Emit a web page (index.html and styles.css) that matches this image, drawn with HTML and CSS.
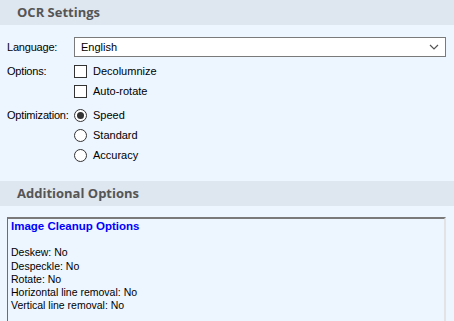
FILE: index.html
```html
<!DOCTYPE html>
<html lang="en">
  <head>
    <meta charset="UTF-8" />
    <title>OCR Settings</title>
    <link rel="stylesheet" href="styles.css">
  </head>
  <body>
    <!-- OCR settings -->
    <div class="section-head">OCR Settings</div>
    <div class="section-body first">
      <div class="row row-lang">
        <div class="label">Language:</div>
        <div class="select">
          <span>English</span>
          <svg class="chevron" width="10" height="6" viewBox="0 0 10 6">
            <path d="M1 1 L5 5 L9 1" fill="none" stroke="#555" stroke-width="1.2" />
          </svg>
        </div>
      </div>

      <div class="row">
        <div class="label">Options:</div>
        <div class="choices">
          <div class="choice"><span class="check"></span>Decolumnize</div>
          <div class="choice"><span class="check"></span>Auto-rotate</div>
        </div>
      </div>

      <div class="row row-opt">
        <div class="label">Optimization:</div>
        <div class="choices">
          <div class="choice"><span class="radio checked"></span>Speed</div>
          <div class="choice"><span class="radio"></span>Standard</div>
          <div class="choice"><span class="radio"></span>Accuracy</div>
        </div>
      </div>
    </div>

    <!-- Additional options -->
    <div class="section-head">Additional Options</div>
    <div class="section-body">
      <div class="textbox">
        <div class="tb-title">Image Cleanup Options</div>
        <div class="tb-gap"></div>
        <div>Deskew: No</div>
        <div>Despeckle: No</div>
        <div>Rotate: No</div>
        <div>Horizontal line removal: No</div>
        <div>Vertical line removal: No</div>
      </div>
    </div>
  </body>
</html>
```

FILE: styles.css
```css
/* page */
body {
  margin: 0;
  height: 321px;
  background-color: #edf5ff;
  font-family: "Liberation Sans", Arial, sans-serif;
  font-size: 11px;
  color: #000;
  overflow: hidden;
}

/* section headers */
.section-head {
  height: 25px;
  line-height: 25px;
  padding-left: 17px;
  background-color: #dee6f0;
  font-family: "Open Sans", sans-serif;
  font-weight: 700;
  font-size: 13px;
  color: #555;
}

.section-body {
  padding: 11px 7px 0 7px;
}

.section-body.first {
  padding-top: 12px;
}

/* form rows */
.row {
  display: flex;
  margin-bottom: 4px;
}

.row-lang {
  align-items: center;
}

.row-opt {
  margin-bottom: 16px;
}

.label {
  width: 67px;
  flex-shrink: 0;
  line-height: 20px;
  letter-spacing: -0.2px;
}

.select {
  flex: 1;
  height: 18px;
  margin-right: 1px;
  border: 1px solid #7a7a7a;
  background-color: #fff;
  display: flex;
  align-items: center;
  justify-content: space-between;
  padding: 0 6px 0 6px;
}

.chevron {
  display: block;
}

.choices {
  display: flex;
  flex-direction: column;
}

.choice {
  display: flex;
  align-items: center;
  height: 20px;
}

.check {
  width: 11px;
  height: 11px;
  border: 1px solid #333;
  background-color: #fff;
  margin-right: 6px;
}

.radio {
  width: 11px;
  height: 11px;
  border: 1px solid #333;
  border-radius: 50%;
  background-color: #fff;
  margin-right: 6px;
  display: flex;
  align-items: center;
  justify-content: center;
}

.radio.checked::after {
  content: "";
  width: 7px;
  height: 7px;
  border-radius: 50%;
  background-color: #333;
}

/* text box */
.textbox {
  height: 102px;
  margin-right: 1px;
  padding: 1px 3px 0 3px;
  border-top: 2px solid #7a7a7a;
  border-left: 1px solid #6d6d6d;
  border-right: 2px solid #e3e3e3;
  font-size: 10.5px;
  line-height: 13.3px;
  overflow: hidden;
}

.tb-title {
  color: #0000ff;
  font-weight: 700;
  font-size: 11.5px;
}

.tb-gap {
  height: 13px;
}
```
